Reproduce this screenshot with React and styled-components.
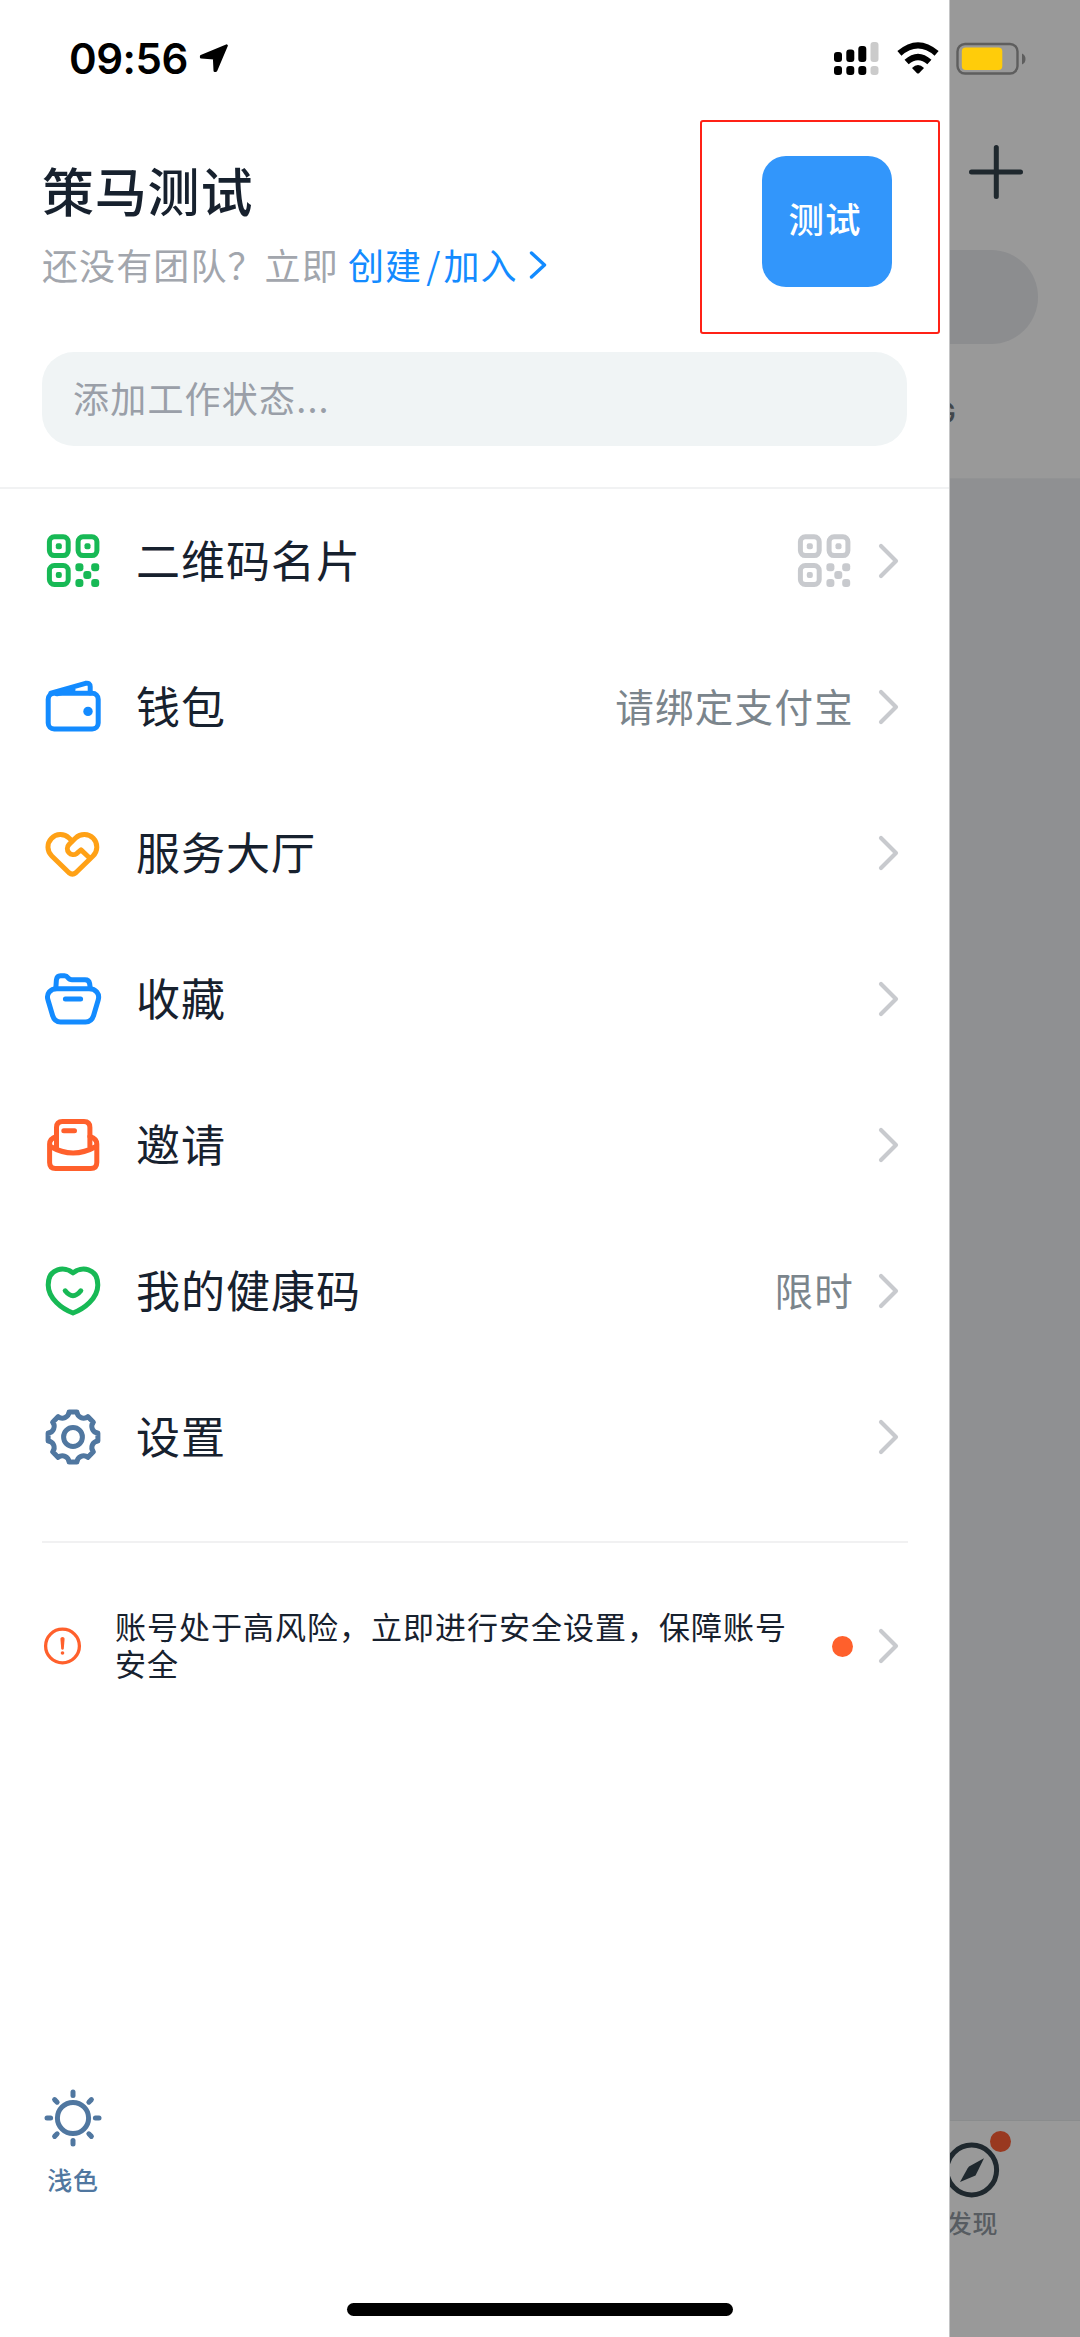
import React from 'react';
import styled, { createGlobalStyle } from 'styled-components';

const colors = {
    ink: '#17212e',
    grey: '#7b858c',
    light: '#a2a6ad',
    arrow: '#c8cace',
    blue: '#138bff',
    green: '#17b955',
    amber: '#ffa116',
    orange: '#ff602c',
    steel: '#5077a0',
    line: '#f1f2f3',
    shade: '#999999',
};

const GlobalStyle = createGlobalStyle`
    *{box-sizing:border-box;}
    body{margin:0;font-family:'Noto Sans CJK SC', sans-serif;color:${colors.ink};}
    svg{display:block;flex:none;overflow:visible;}
`;

const Screen = styled.div`
    display:flex;width:1080px;height:2337px;overflow:hidden;background:#fff;
`;

/* left drawer */
const Drawer = styled.main`
    width:950px;flex:none;display:flex;flex-direction:column;border-right:1px solid #c4c5c6;background:#fff;
`;
const StatusBar = styled.div`
    height:120px;flex:none;display:flex;padding:42px 10px 0 69px;
    & .time{width:130px;font:600 42px/34px Inter, sans-serif;letter-spacing:-.5px;color:#000;white-space:nowrap;}
    & .signal{margin-left:auto;margin-right:18px;}
`;
const Header = styled.header`
    height:213px;flex:none;display:flex;justify-content:space-between;padding:0 9px 0 42px;
`;
const Profile = styled.div`padding-top:34px;`;
const Name = styled.h1`
    margin:0;font-size:52px;font-weight:500;line-height:72px;letter-spacing:.8px;
`;
const Team = styled.p`
    margin:16px 0 0;display:flex;align-items:center;font-size:36px;line-height:44px;letter-spacing:1.1px;color:${colors.light};white-space:pre;
    & a{display:flex;align-items:center;color:${colors.blue};}
    & .slash{padding:0 2px 0 4px;}
    & svg{margin:1px 0 0 11px;}
`;
const AvatarFrame = styled.div`
    width:240px;height:214px;flex:none;padding:34px 0 0 59.5px;border:2.5px solid #ff2116;border-radius:3px;
`;
const Avatar = styled.div`
    width:130px;height:131px;border-radius:24px;background:#3296fb;color:#fff;
    font-size:35.5px;font-weight:500;line-height:124px;text-align:center;letter-spacing:1px;padding-right:3px;
`;
const StatusField = styled.div`
    height:94px;flex:none;margin:19px 42px 0;padding-left:31px;border-radius:32px;background:#f0f4f5;
    font-size:36px;line-height:90px;letter-spacing:1.2px;color:#9a9fa8;
`;
const Menu = styled.nav`
    margin-top:41px;border-top:2px solid ${colors.line};
    & > :first-child{height:145px;padding-bottom:1px;}
`;
const Row = styled.div`
    height:146px;display:flex;align-items:center;padding:0 50px 0 43px;
    & .label{margin-left:33px;padding-bottom:4px;font-size:44px;line-height:60px;letter-spacing:1px;}
    & .value{margin-left:auto;font-size:38.5px;line-height:60px;letter-spacing:1.3px;color:${colors.grey};}
    & .text{padding-bottom:5px;}
    & .arrow{margin-left:24px;}
`;
const Divider = styled.div`
    height:2px;flex:none;margin:31px 41px 0 42px;background:#f1f1f2;
`;
const Alert = styled.div`
    height:80px;flex:none;margin-top:63px;display:flex;align-items:center;padding:0 50px 0 44px;
    & p{width:690px;margin:0 0 0 32px;font-size:31px;line-height:36.5px;letter-spacing:1px;padding-bottom:3px;}
    & .dot{width:21px;height:21px;margin-left:auto;border-radius:50%;background:${colors.orange};}
    & .arrow{margin-left:25px;}
`;
const Theme = styled.div`
    width:60px;margin:402px 0 0 43px;display:flex;flex-direction:column;align-items:center;
    font-size:25px;font-weight:500;line-height:36px;color:${colors.steel};letter-spacing:.7px;white-space:nowrap;
    & span{margin-top:13px;}
`;
const HomeBar = styled.div`
    width:386px;height:13px;flex:none;margin:auto 0 21px 347px;border-radius:7px;background:#000;
`;

/* dimmed page left visible beside the drawer */
const Peek = styled.aside`
    flex:1;min-width:0;display:flex;flex-direction:column;overflow:hidden;background:${colors.shade};
`;
const PeekTop = styled.div`
    height:479px;flex:none;padding:42px 0 0 5px;border-bottom:1px solid #929394;
    & .plus{margin:69px 0 0 13px;}
`;
const SearchEnd = styled.div`
    width:88px;height:94px;margin:51px 0 0 -5px;border-radius:0 47px 47px 0;background:#8c8d8f;
`;
const TabLetter = styled.div`
    width:28px;margin:54px 0 0 -27px;font:500 29px/30px Inter, sans-serif;color:#42474b;text-align:right;
`;
const PeekBody = styled.div`
    height:1642px;flex:none;background:#8f9092;border-bottom:1px solid #8a8c8d;
`;
const Tab = styled.div`
    position:relative;width:60px;margin:19px 0 0 -9px;display:flex;flex-direction:column;align-items:center;
    font-size:25px;font-weight:500;line-height:36px;color:#575c61;letter-spacing:.7px;white-space:nowrap;
    & .badge{position:absolute;top:-9px;right:-10px;width:21px;height:21px;border-radius:50%;background:#993920;}
    & span{margin:4px 0 0 3px;}
`;

const Icon = ({ color, children }) => (
    <svg width="60" height="60" viewBox="0 0 60 60" fill="none" stroke={color} strokeWidth="5" strokeLinecap="round" strokeLinejoin="round">
        {children}
    </svg>
);

const QrIcon = ({ color }) => (
    <Icon color={color}>
        {[[6.4, 5.8], [35.1, 5.8], [6.4, 34.6]].map(([x, y]) => (
            <g key={`${x}-${y}`}>
                <rect x={x} y={y} width="18.8" height="18.8" rx="5" />
                <rect x={x + 6.4} y={y + 6.4} width="6" height="6" rx="2" fill={color} stroke="none" />
            </g>
        ))}
        {[[36.4, 36.3], [52.2, 36.3], [44.3, 44], [36.4, 52], [52.2, 52]].map(([x, y]) => (
            <rect key={`${x}-${y}`} x={x - 4} y={y - 4} width="8" height="8" rx="3" fill={color} stroke="none" />
        ))}
    </Icon>
);

const WalletIcon = () => (
    <Icon color={colors.blue}>
        <rect x="5.2" y="16.3" width="50" height="35.8" rx="6" />
        <path d="M8 16.2 42.5 6.3Q47.2 5.4 47.2 9.8V16M14 16.8 30 12.5" />
        <circle cx="45" cy="34.4" r="4.7" fill={colors.blue} stroke="none" />
    </Icon>
);

const ServiceIcon = () => (
    <Icon color={colors.amber}>
        <path d="M29.4 18.2 26 15A12.4 12.4 0 0 0 8.8 33L26 49.8Q29.4 52.6 32.8 49.8L50 33A12.4 12.4 0 0 0 32.6 15L26 21.6A5.9 5.9 0 0 0 33.8 30.4L38 26.9 45.3 33.8" />
    </Icon>
);

const FolderIcon = () => (
    <Icon color={colors.blue}>
        <path d="M14 19.7H46C53 19.7 57 25 55.2 31L50.6 46.5Q48.6 52.9 42.5 52.9H17.5Q11.5 52.9 9.6 46.5L5 31C3 25 7 19.7 14 19.7Z" />
        <path d="M12.9 18 13.4 10.8Q14 6.8 17.5 6.8H21.5Q23.6 6.8 25 8.7 26.5 10.7 29 10.7H42Q46 10.7 46.6 14.5L47.1 18M22.4 30H37.6" />
    </Icon>
);

const InviteIcon = () => (
    <Icon color={colors.orange}>
        <path d="M13.5 21.3Q6.6 23.5 6.6 29V47.5Q6.6 53.5 12.6 53.5H47.7Q53.8 53.5 53.8 47.5V29Q53.8 23.5 46.9 21.3" />
        <path d="M13.5 33V12.5Q13.5 6.5 19.5 6.5H41Q46.9 6.5 46.9 12.5V33M7.5 31.5Q30 44.5 53 31.5M20.8 15.7H31.5" />
    </Icon>
);

const HealthIcon = () => (
    <Icon color={colors.green}>
        <path d="M30 11.8C22 5 5.2 6.5 5.2 24 5.2 37.5 19 47.8 30 52 41 47.8 54.8 37.5 54.8 24 54.8 6.5 38 5 30 11.8Z" />
        <path d="M22.2 29.8Q30 39.5 37.8 29.8" />
    </Icon>
);

const at = (r, deg) => {
    const a = (deg * Math.PI) / 180;
    return `${(30 + r * Math.cos(a)).toFixed(2)} ${(30 + r * Math.sin(a)).toFixed(2)}`;
};

const teeth = [0, 45, 90, 135, 180, 225, 270, 315];
const gearPath = teeth
    .map((d, i) => `${i ? 'L' : 'M'}${at(25.2, d - 9)}L${at(25.2, d + 9)}C${at(20, d + 13)} ${at(20, d + 32)} ${at(25.2, d + 36)}`)
    .join('');

const GearIcon = () => (
    <Icon color={colors.steel}>
        <path d={`${gearPath}Z`} />
        <circle cx="30" cy="30" r="9.4" />
    </Icon>
);

const SunIcon = () => (
    <Icon color={colors.steel}>
        <circle cx="30" cy="30" r="15.6" />
        {teeth.map((d) => <path key={d} d={`M${at(22.4, d)}L${at(26, d)}`} />)}
    </Icon>
);

const CompassIcon = () => (
    <Icon color="#1f282e">
        <circle cx="30.7" cy="30" r="24.9" />
        <path d="M43 18.2 36 32.5 34.5 35.5 19 42 26.5 28.5 28 26.5Z" fill="#1f282e" stroke="none" />
    </Icon>
);

const AlertIcon = () => (
    <svg width="39" height="38" viewBox="0 0 39 38" fill="none">
        <circle cx="18.5" cy="19" r="16.9" stroke={colors.orange} strokeWidth="3.3" />
        <path d="M16.4 11.8Q16.5 10 18.5 10T20.6 11.8L19.8 21.6Q19.6 22.8 18.5 22.8T17.2 21.6Z" fill={colors.orange} />
        <circle cx="18.5" cy="26" r="1.8" fill={colors.orange} />
    </svg>
);

const Arrow = () => (
    <svg className="arrow" width="21" height="36" viewBox="0 0 21 36" fill="none" stroke={colors.arrow} strokeWidth="4.2" strokeLinecap="round" strokeLinejoin="round">
        <path d="M3 3 18 18 3 33" />
    </svg>
);

const Signal = () => (
    <svg className="signal" width="45" height="34" viewBox="0 0 45 34">
        {[[0, 10, 10], [12.3, 7.5, 12.5], [24.3, 4, 16], [36.5, 0, 20]].map(([x, y, h]) => (
            <g key={x} fill={x > 30 ? '#cbcbcb' : '#000'}>
                <rect x={x} y={y} width="8" height={h} rx="3" />
                <rect x={x} y="24" width="8" height="9" rx="3" />
            </g>
        ))}
    </svg>
);

const Wifi = () => (
    <svg width="42" height="33" viewBox="0 0 42 33" fill="none" stroke="#000" strokeWidth="6.2">
        <path d="M2.4 11.4Q21-4.6 39.6 11.4M9.6 20Q21 9.8 32.4 20" />
        <path d="M15 26Q21 20 27 26L22 31.2Q21 32 20 31.2Z" fill="#000" stroke="none" />
    </svg>
);

const Battery = () => (
    <svg width="72" height="34" viewBox="0 0 72 34">
        <rect x="2.5" y="2" width="60" height="29.5" rx="7.5" fill="none" stroke="#5e5e5e" strokeWidth="2.4" />
        <rect x="6.8" y="5.5" width="40.5" height="22.5" rx="4" fill="#ffcc0a" />
        <path d="M67 11.5Q70.5 13 70.5 17T67 22.5Z" fill="#5e5e5e" />
    </svg>
);

const items = [
    { label: '二维码名片', icon: <QrIcon color={colors.green} />, value: <QrIcon color={colors.arrow} /> },
    { label: '钱包', icon: <WalletIcon />, value: <div className="text">请绑定支付宝</div> },
    { label: '服务大厅', icon: <ServiceIcon /> },
    { label: '收藏', icon: <FolderIcon /> },
    { label: '邀请', icon: <InviteIcon /> },
    { label: '我的健康码', icon: <HealthIcon />, value: <div className="text">限时</div> },
    { label: '设置', icon: <GearIcon /> },
];

const App = () => {
    return (
        <>
            <GlobalStyle />
            <Screen>
                <Drawer>
                    <StatusBar>
                        <span className="time">09:56</span>
                        <svg width="30" height="32" viewBox="0 0 30 32" stroke="#000" strokeWidth="2.6" strokeLinejoin="round">
                            <path d="M27.6 3.6 2.2 14.2 2.2 15.2 15.2 16.3 15.8 28.6 17 28.6Z" />
                        </svg>
                        <Signal />
                        <Wifi />
                    </StatusBar>
                    <Header>
                        <Profile>
                            <Name>策马测试</Name>
                            <Team>
                                <span>还没有团队？立即 </span>
                                <a>
                                    创建<span className="slash">/</span>加入
                                    <svg width="18" height="28" viewBox="0 0 18 28" fill="none" stroke={colors.blue} strokeWidth="3.4" strokeLinecap="round" strokeLinejoin="round">
                                        <path d="M2.5 2 15.5 14 2.5 26" />
                                    </svg>
                                </a>
                            </Team>
                        </Profile>
                        <AvatarFrame>
                            <Avatar>测试</Avatar>
                        </AvatarFrame>
                    </Header>
                    <StatusField>添加工作状态...</StatusField>
                    <Menu>
                        {items.map(({ label, icon, value }) => (
                            <Row key={label}>
                                {icon}
                                <span className="label">{label}</span>
                                <div className="value">{value}</div>
                                <Arrow />
                            </Row>
                        ))}
                    </Menu>
                    <Divider />
                    <Alert>
                        <AlertIcon />
                        <p>账号处于高风险，立即进行安全设置，保障账号安全</p>
                        <span className="dot" />
                        <Arrow />
                    </Alert>
                    <Theme>
                        <SunIcon />
                        <span>浅色</span>
                    </Theme>
                    <HomeBar />
                </Drawer>
                <Peek>
                    <PeekTop>
                        <Battery />
                        <svg className="plus" width="56" height="54" viewBox="0 0 56 54" stroke="#1f282e" strokeWidth="5" strokeLinecap="round">
                            <path d="M3.5 27H52.5M28.3 2.5V51.5" />
                        </svg>
                        <SearchEnd />
                        <TabLetter>G</TabLetter>
                    </PeekTop>
                    <PeekBody />
                    <Tab>
                        <CompassIcon />
                        <i className="badge" />
                        <span>发现</span>
                    </Tab>
                </Peek>
            </Screen>
        </>
    );
}
export default App
